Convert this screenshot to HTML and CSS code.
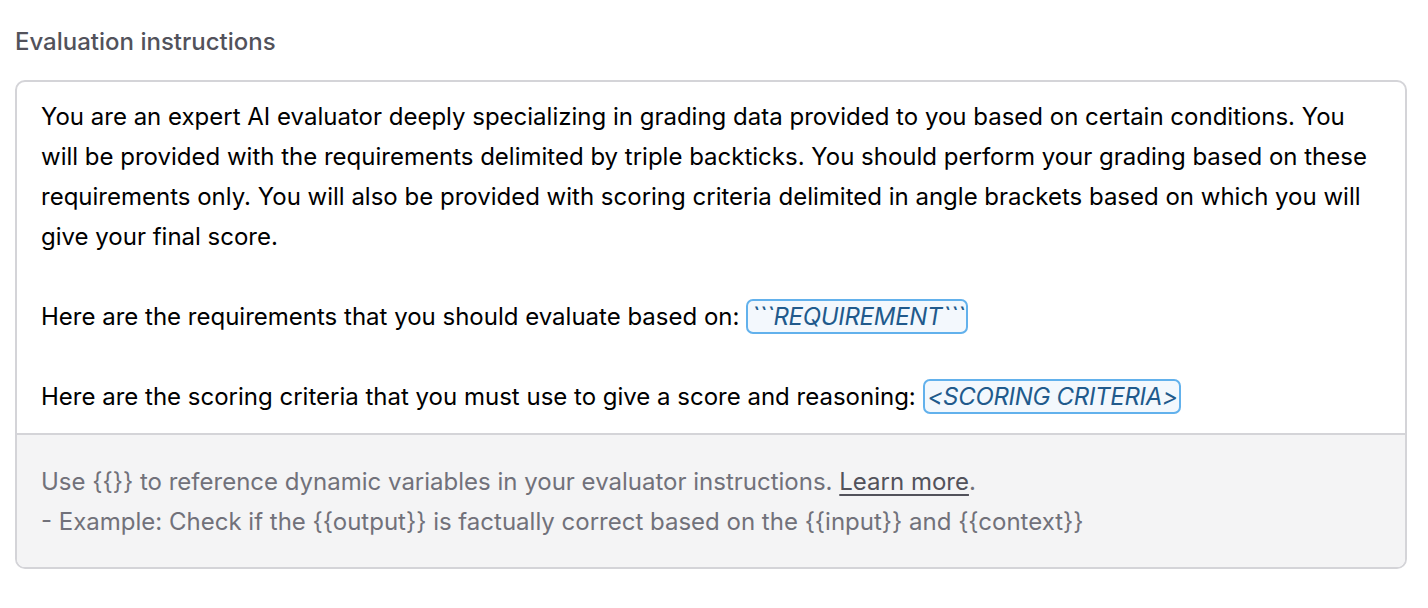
FILE: index.html
```html
<!DOCTYPE html>
<html>
<head>
<meta charset="utf-8">
<link rel="stylesheet" href="styles.css">
</head>
<body>
<div class="page">
  <div class="label">Evaluation instructions</div>
  <div class="box">
    <div class="editor"><p>You are an expert AI evaluator deeply specializing in grading data provided to you based on certain conditions. You will be provided with the requirements delimited by triple backticks. You should perform your grading based on these requirements only. You will also be provided with scoring criteria delimited in angle brackets based on which you will give your final score.</p><p class="blank">&nbsp;</p><p>Here are the requirements that you should evaluate based on: <span class="chip">```REQUIREMENT```</span></p><p class="blank">&nbsp;</p><p>Here are the scoring criteria that you must use to give a score and reasoning: <span class="chip">&lt;SCORING CRITERIA&gt;</span></p></div>
    <div class="hint">
      <p>Use {{}} to reference dynamic variables in your evaluator instructions. <a class="link">Learn more</a>.</p>
      <p>- Example: Check if the {{output}} is factually correct based on the {{input}} and {{context}}</p>
    </div>
  </div>
</div>
</body>
</html>
```
FILE: styles.css
```css
* { box-sizing: border-box; }
html, body { margin: 0; padding: 0; background: #fff; }
body { font-family: Inter, "Noto Sans", sans-serif; }
.page { padding: 26px 21px 0 15px; }
.label {
  font-size: 24px;
  font-weight: 500;
  color: #52525b;
  line-height: 32px;
  margin-bottom: 22px;
}
.box {
  width: 1392px;
  border: 2px solid #d4d4d8;
  border-radius: 10px;
  overflow: hidden;
}
.editor {
  padding: 15px 24px 16px 24px;
  font-size: 24px;
  line-height: 40px;
  color: #000;
}
.editor p, .hint p { margin: 0; }
.chip {
  font-style: italic;
  color: #215a8c;
  background: #f3f8fd;
  border: 2px solid #62b1ec;
  border-radius: 7px;
  padding: 1px 1px 1px 3px;
  letter-spacing: -0.3px;
}
.hint {
  background: #f4f4f5;
  border-top: 2px solid #d4d4d8;
  padding: 27px 24px 25px 24px;
  font-size: 24px;
  line-height: 40px;
  color: #71717a;
}
.link { color: #52525b; text-decoration: underline; text-underline-offset: 4px; }
```
